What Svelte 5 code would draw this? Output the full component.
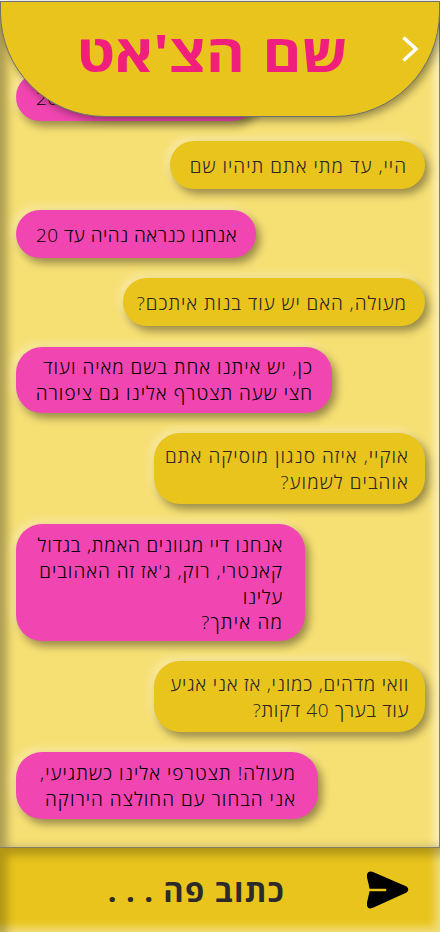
<script>
  const messages = [
    { mine: false, w: 240, h: 48, pad: 19, top: 0, lines: [['אנחנו כנראה נהיה עד 20', 0.48]] },
    { mine: true, w: 255, h: 48, pad: 18, top: 20, lines: [['היי, עד מתי אתם תיהיו שם', 1.04]] },
    { mine: false, w: 240, h: 48, pad: 19, top: 21, lines: [['אנחנו כנראה נהיה עד 20', 0.48]] },
    { mine: true, w: 302, h: 48, pad: 18, top: 20, lines: [['מעולה, האם יש עוד בנות איתכם?', 0.96]] },
    { mine: false, w: 316, h: 66, pad: 19, top: 21, lines: [['כן, יש איתנו אחת בשם מאיה ועוד', 0.98], ['חצי שעה תצטרף אלינו גם ציפורה', 1]] },
    { mine: true, w: 271, h: 71, pad: 16, top: 20, lines: [['אוקיי, איזה סנגון מוסיקה אתם', 1.04], ['אוהבים לשמוע?', 1.08]] },
    { mine: false, w: 289, h: 117, pad: 22, top: 20, lines: [['אנחנו דיי מגוונים האמת, בגדול', 0.78], ["קאנטרי, רוק, ג'אז זה האהובים", 1], ['עלינו', 0.7], ['מה איתך?', 1.2]] },
    { mine: true, w: 271, h: 71, pad: 16, top: 20, lines: [['וואי מדהים, כמוני, אז אני אגיע', 0.78], ['עוד בערך 40 דקות?', 0.66]] },
    { mine: false, w: 302, h: 67, pad: 22, top: 20, lines: [['מעולה! תצטרפי אלינו כשתגיעי,', 1.04], ['אני הבחור עם החולצה הירוקה', 1.02]] }
  ];
</script>

<div class="screen">
  <header>
    <h1 dir="rtl">שם הצ'אט</h1>
    <svg class="back" width="20" height="30" viewBox="0 0 20 30" aria-hidden="true">
      <path d="M3.5 3.5 L16 15 L3.5 26.5" fill="none" stroke="#fff" stroke-width="3.6" />
    </svg>
  </header>

  <main>
    {#each messages as m}
      <div
        class="bubble"
        class:mine={m.mine}
        class:single={m.lines.length === 1}
        class:tall={m.lines.length > 2}
        dir="rtl"
        style="width:{m.w}px;height:{m.h}px;margin-top:{m.top}px;padding-right:{m.pad}px"
      >
        {#each m.lines as [line, track]}<p style="letter-spacing:{track}px">{line}</p>{/each}
      </div>
    {/each}
  </main>

  <footer>
    <span class="hint" dir="rtl">כתוב פה <span class="dots">. . .</span></span>
    <svg class="send" width="44" height="38" viewBox="0 0 44 38" aria-hidden="true">
      <path d="M6.4 .8 L40.6 15.6 Q44 18.6 40.6 21.6 L6.4 37 Q2 38.6 1 34.4 V31.5 L3.6 20.3 H19.2 Q20.4 20.3 20.4 19 Q20.4 17.7 19.2 17.7 H3.6 L1 6.2 V3.6 Q2 -.6 6.4 .8Z" />
    </svg>
  </footer>
</div>

<style>
  :global(body) { margin: 0; background: #fff; }
  .screen {
    width: 440px;
    height: 932px;
    display: flex;
    flex-direction: column;
    overflow: hidden;
    font-family: "Open Sans", "Noto Sans", sans-serif;
    box-sizing: border-box;
    padding-top: 1px;
  }
  header {
    position: relative;
    z-index: 2;
    flex: none;
    width: 440px;
    height: 116px;
    box-sizing: border-box;
    border: 1px solid #707070;
    border-radius: 0 0 105px 105px;
    background: #e8c41c;
    box-shadow: 3px 3px 8px rgba(0, 0, 0, .4);
    display: flex;
    align-items: center;
  }
  h1 {
    margin: 0 0 14px 78px;
    width: 269px;
    font-size: 52px;
    line-height: 80px;
    font-weight: 700;
    color: #f01f7d;
    white-space: nowrap;
    word-spacing: 2px;
    transform: scaleX(1.14);
    transform-origin: right center;
  }
  .back { margin: 0 0 20px 52px; }
  main {
    flex: none;
    height: 847px;
    margin-top: -116px;
    box-sizing: border-box;
    padding: 72px 14px 0 16px;
    display: flex;
    flex-direction: column;
    align-items: flex-start;
    background: #f6df73;
    border-right: 1px solid #85805f;
    border-bottom: 1px solid #85805f;
    box-shadow: inset 8px 0 10px -1px rgba(0, 0, 0, .3), inset -7px 0 8px -2px rgba(255, 255, 255, .5);
  }
  .bubble {
    flex: none;
    box-sizing: border-box;
    border-radius: 26px;
    background: #f146b1;
    color: #000;
    box-shadow: 4px 5px 9px rgba(0, 0, 0, .38), -4px -4px 9px rgba(255, 255, 255, .32);
    display: flex;
    flex-direction: column;
    justify-content: center;
    padding-top: 2px;
  }
  .single { padding-top: 4px; }
  .tall { padding-top: 4px; }
  .mine { align-self: flex-end; background: #e8c41c; color: #2a2629; }
  p {
    margin: 0;
    font-size: 19px;
    line-height: 25.7px;
    font-weight: 300;
    white-space: nowrap;
  }
  footer {
    flex: 1;
    display: flex;
    align-items: center;
    background: #e8c41c;
    box-shadow: inset 8px 8px 10px -1px rgba(0, 0, 0, .24), inset -7px -7px 9px -2px rgba(255, 255, 255, .42);
  }
  .hint {
    width: 178px;
    margin: 0 0 1px 107px;
    font-size: 31px;
    line-height: 44px;
    font-weight: 700;
    color: #2c292b;
    white-space: nowrap;
    letter-spacing: 1.3px;
  }
  .dots { letter-spacing: .7px; }
  .send { margin: 0 0 0 81px; }
</style>
